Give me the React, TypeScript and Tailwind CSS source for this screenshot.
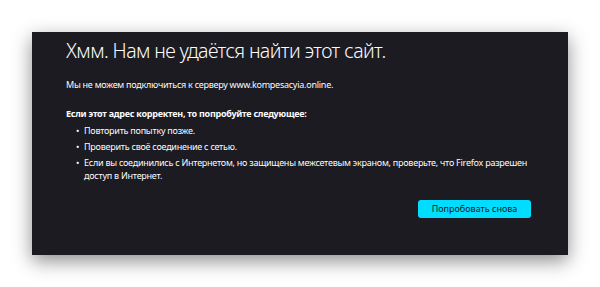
export default function App() {
  const items = [
    "Повторить попытку позже.",
    "Проверить своё соединение с сетью.",
    "Если вы соединились с Интернетом, но защищены межсетевым экраном, проверьте, что Firefox разрешен доступ в Интернет.",
  ];
  return (
    <div className="w-[600px] h-[287px] bg-white pt-[32px] pl-[32px] font-['Noto_Sans',sans-serif]">
      <div className="w-[536px] h-[223px] bg-[#1c1b22] shadow-[0_6px_18px_rgba(0,0,0,0.45)] pl-[34px] pr-[30px] pt-[4px]">
        <h1 className="text-[19.5px] leading-[30px] font-light tracking-[-0.6px] text-[#fbfbfe]">
          Хмм. Нам не удаётся найти этот сайт.
        </h1>
        <p className="mt-[12px] text-[9px] leading-[14px] tracking-[-0.25px] text-[#fbfbfe]">
          Мы не можем подключиться к серверу www.kompesacyia.online.
        </p>
        <p className="mt-[15px] text-[9px] leading-[14px] tracking-[-0.25px] font-bold text-[#fbfbfe]">
          Если этот адрес корректен, то попробуйте следующее:
        </p>
        <ul className="mt-[3px] text-[9px] leading-[13px] tracking-[-0.25px] text-[#fbfbfe] flex flex-col gap-[3px]">
          {items.map((t) => (
            <li key={t} className="flex">
              <span className="w-[8px] ml-[10px] shrink-0">•</span>
              <span>{t}</span>
            </li>
          ))}
        </ul>
        <div className="flex justify-end mt-[18px] pr-[7px]">
          <button className="h-[18px] w-[113px] rounded-[3px] bg-[#00ddff] text-[9px] text-[#15141a]">
            Попробовать снова
          </button>
        </div>
      </div>
    </div>
  );
}
